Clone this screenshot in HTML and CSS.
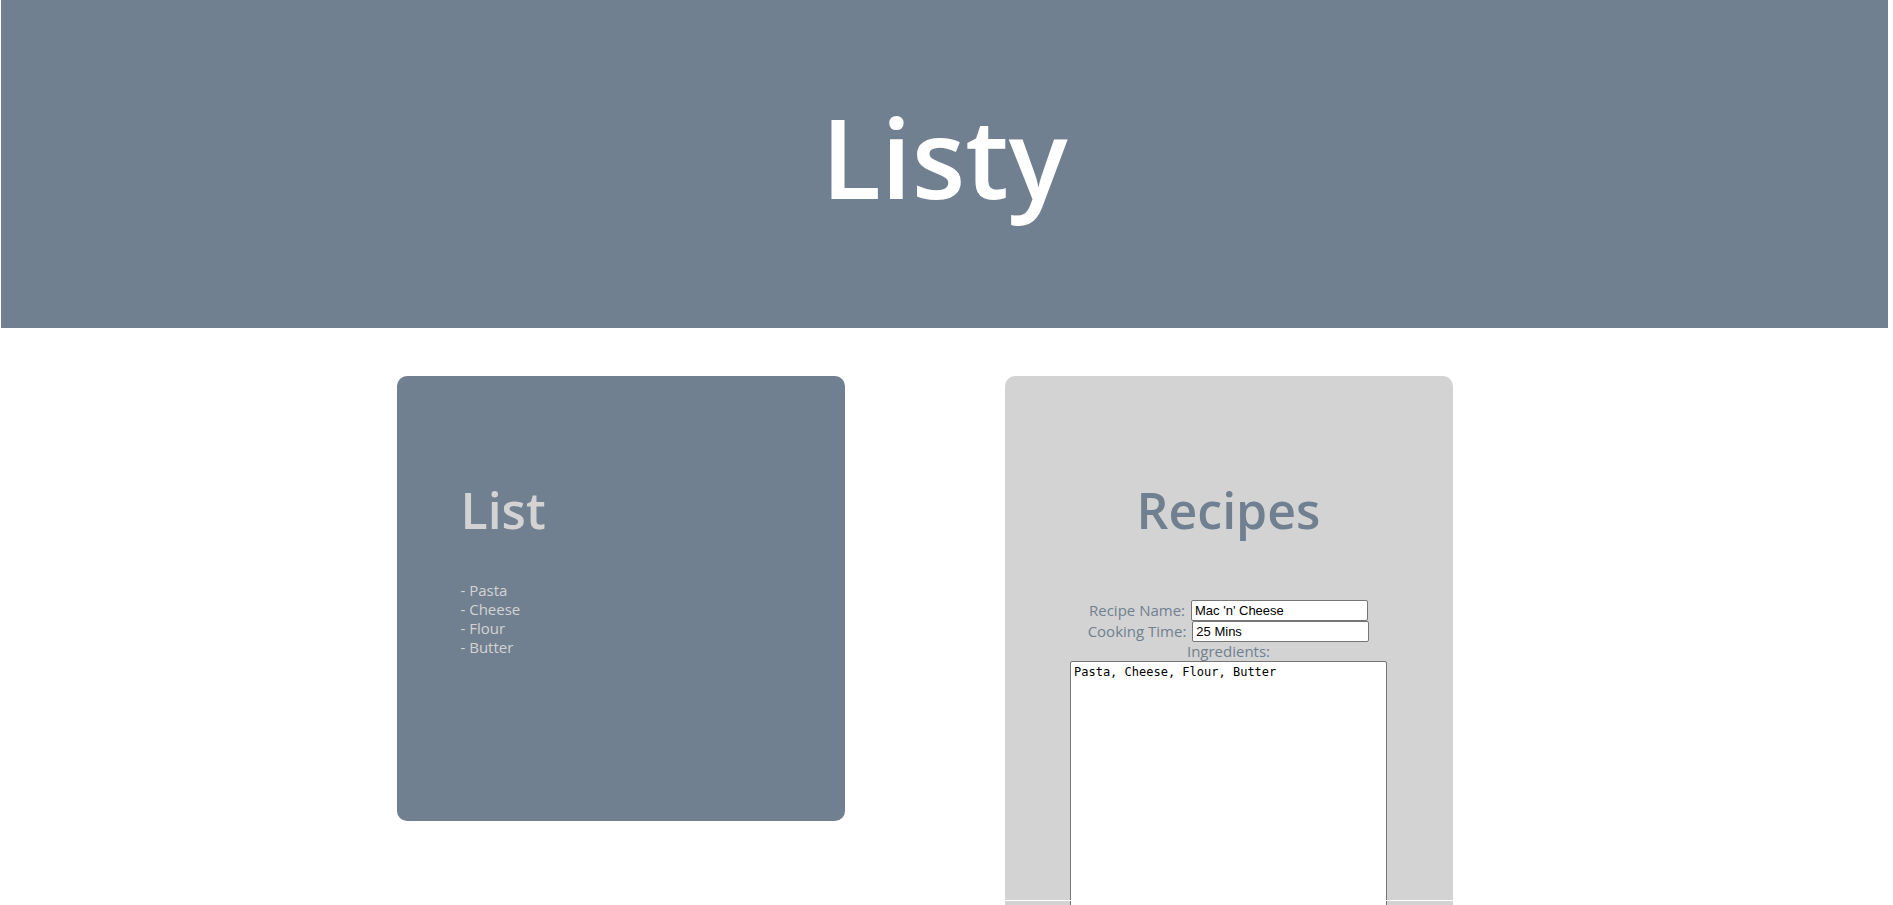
FILE: index.html
```html
<!DOCTYPE html>
<html lang="en">
<head>
<meta charset="utf-8">
<title>Listy</title>
<link rel="stylesheet" href="styles.css">
</head>
<body>
<header class="banner">
  <h1 class="banner-title">Listy</h1>
</header>
<main class="cards">
  <section class="card card-list">
    <h2 class="card-title">List</h2>
    <ul class="items">
      <li>- Pasta</li>
      <li>- Cheese</li>
      <li>- Flour</li>
      <li>- Butter</li>
    </ul>
  </section>
  <section class="card card-recipes">
    <h2 class="card-title">Recipes</h2>
    <form class="form">
      <div class="row">
        <label for="name">Recipe Name:</label>
        <input class="field" id="name" type="text" value="Mac 'n' Cheese">
      </div>
      <div class="row">
        <label for="time">Cooking Time:</label>
        <input class="field" id="time" type="text" value="25 Mins">
      </div>
      <label class="area-label" for="ingredients">Ingredients:</label>
      <textarea class="area" id="ingredients" spellcheck="false">Pasta, Cheese, Flour, Butter</textarea>
    </form>
  </section>
</main>
</body>
</html>
```
FILE: styles.css
```css
* {
  box-sizing: border-box;
}

html {
  scrollbar-width: none;
}

body {
  margin: 0 5px 0 1px;
  background: #fff;
  font-family: "Trebuchet MS", "Open Sans", sans-serif;
  font-size: 15px;
  line-height: 19px;
}

.banner {
  padding: 92px 16px 108px;
  background: slategray;
  color: #fff;
  text-align: center;
}

.banner-title {
  margin: 0;
  font-size: 110px;
  line-height: 128px;
  font-weight: 600;
}

.cards {
  display: flex;
  justify-content: center;
  align-items: flex-start;
  gap: 160px;
  margin: 48px 40px 0 0;
}

.card {
  position: relative;
  width: 448px;
  padding: 103px 64px 64px;
  border-radius: 10px;
}

.card-list {
  min-height: 445px;
  background: slategray;
  color: lightgray;
}

.card-recipes {
  background: lightgray;
  color: slategray;
  text-align: center;
}

.card-recipes::after {
  content: "";
  position: absolute;
  top: 524px;
  left: 0;
  right: 0;
  height: 1px;
  background: #fff;
}

.card-title {
  margin: 0;
  font-size: 50px;
  line-height: 62px;
  font-weight: 600;
}

.items {
  list-style: none;
  margin: 40px 0 0;
  padding: 0;
}

.form {
  margin-top: 59px;
}

.row {
  display: flex;
  justify-content: center;
  align-items: center;
  gap: 6px;
}

.field {
  width: 177px;
  height: 21px;
  padding: 1px 3px;
  border: 1px solid #767676;
  border-radius: 2px;
  background: #fff;
  color: #000;
  font: 13px "Liberation Sans", Arial, sans-serif;
}

.area-label {
  display: block;
}

.area {
  display: block;
  width: 317px;
  height: 400px;
  margin: 0 auto;
  padding: 2px 3px;
  border: 1px solid #767676;
  border-radius: 2px;
  background: #fff;
  color: #000;
  font: 12px/16px Consolas, "DejaVu Sans Mono", monospace;
  resize: none;
}
```
